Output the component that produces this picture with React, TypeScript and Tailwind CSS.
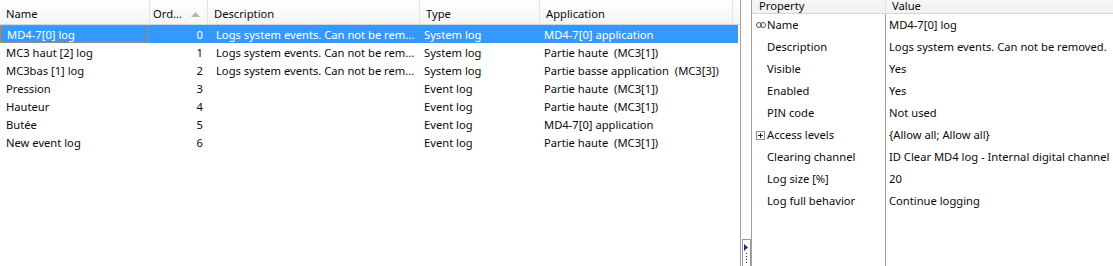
const rows = [
  { name: 'MD4-7[0] log', order: 0, desc: 'Logs system events. Can not be rem...', type: 'System log', app: 'MD4-7[0] application' },
  { name: 'MC3 haut [2] log', order: 1, desc: 'Logs system events. Can not be rem...', type: 'System log', app: 'Partie haute  (MC3[1])' },
  { name: 'MC3bas [1] log', order: 2, desc: 'Logs system events. Can not be rem...', type: 'System log', app: 'Partie basse application  (MC3[3])' },
  { name: 'Pression', order: 3, desc: '', type: 'Event log', app: 'Partie haute  (MC3[1])' },
  { name: 'Hauteur', order: 4, desc: '', type: 'Event log', app: 'Partie haute  (MC3[1])' },
  { name: 'Butée', order: 5, desc: '', type: 'Event log', app: 'MD4-7[0] application' },
  { name: 'New event log', order: 6, desc: '', type: 'Event log', app: 'Partie haute  (MC3[1])' },
];

const props = [
  { label: 'Name', value: 'MD4-7[0] log', icon: 'link' },
  { label: 'Description', value: 'Logs system events. Can not be removed.' },
  { label: 'Visible', value: 'Yes' },
  { label: 'Enabled', value: 'Yes' },
  { label: 'PIN code', value: 'Not used' },
  { label: 'Access levels', value: '{Allow all; Allow all}', icon: 'plus' },
  { label: 'Clearing channel', value: 'ID Clear MD4 log - Internal digital channel' },
  { label: 'Log size [%]', value: '20' },
  { label: 'Log full behavior', value: 'Continue logging' },
];

function LinkIcon() {
  return (
    <svg width="10" height="6" viewBox="0 0 10 6" className="shrink-0">
      <rect x="0.5" y="0.5" width="5" height="5" rx="2.5" fill="none" stroke="#555" />
      <rect x="4.5" y="0.5" width="5" height="5" rx="2.5" fill="none" stroke="#555" />
    </svg>
  );
}

function PlusBox() {
  return (
    <svg width="9" height="9" viewBox="0 0 9 9" className="shrink-0">
      <rect x="0.5" y="0.5" width="8" height="8" fill="#fff" stroke="#8c8c8c" />
      <path d="M2 4.5h5M4.5 2v5" stroke="#222" />
    </svg>
  );
}

function HeaderCell({ w, children, pl = 'pl-[6px]' }: { w: string; children?: React.ReactNode; pl?: string }) {
  return (
    <div className={`${w} h-full flex items-center pt-[5px] ${pl} border-r border-[#e3e3e3] shrink-0`}>
      {children}
    </div>
  );
}

export default function App() {
  return (
    <div
      className="w-[1113px] h-[266px] flex bg-white text-[#0a0a0a] text-[11.2px] overflow-hidden"
      style={{ fontFamily: '"Noto Sans", Lato, sans-serif' }}
    >
      {/* Log list */}
      <div className="w-[741px] h-full border-r border-[#a0a0a0] shrink-0">
        <div className="h-[25px] flex bg-gradient-to-b from-white to-[#f4f5f7] border-b border-[#d5d5d5]">
          <HeaderCell w="w-[150px]">Name</HeaderCell>
          <HeaderCell w="w-[58px]" pl="pl-[3px]">
            <span>Ord...</span>
            <svg width="9" height="5" viewBox="0 0 9 5" className="ml-[9px]">
              <path d="M0 5L4.5 0L9 5Z" fill="#b4b4b4" />
            </svg>
          </HeaderCell>
          <HeaderCell w="w-[212px]">Description</HeaderCell>
          <HeaderCell w="w-[120px]">Type</HeaderCell>
          <HeaderCell w="w-[193px]">Application</HeaderCell>
        </div>
        {rows.map((r, i) => {
          const sel = i === 0;
          return (
            <div key={r.name} className={`h-[18px] flex items-center w-[738px] ${sel ? 'bg-[#3399ff] text-white' : ''}`}>
              <div className={`w-[148px] h-full flex items-center pt-[2px] pl-[6px] shrink-0 ${sel ? 'border border-dotted border-[#e08a3c]' : ''}`}>
                {r.name}
              </div>
              <div className="w-[56px] h-full flex items-center justify-end pt-[2px] pr-[1px] shrink-0">{r.order}</div>
              <div className="w-[212px] h-full flex items-center pt-[2px] pl-[12px] shrink-0 whitespace-nowrap overflow-hidden">{r.desc}</div>
              <div className="w-[120px] h-full flex items-center pt-[2px] pl-[8px] shrink-0">{r.type}</div>
              <div className="h-full flex items-center pt-[2px] pl-[8px] whitespace-pre">{r.app}</div>
            </div>
          );
        })}
      </div>

      {/* Splitter */}
      <div className="w-[11px] h-full border-r border-[#a0a0a0] shrink-0 flex flex-col justify-end items-center">
        <div className="w-[9px] h-[27px] border border-[#9a9a9a] border-b-0 flex flex-col items-center pt-[4px] gap-[2px]">
          <svg width="4" height="7" viewBox="0 0 4 7">
            <path d="M0 0L4 3.5L0 7Z" fill="#1a2a8c" />
          </svg>
          <div className="w-[1px] h-[1px] bg-[#1a2a8c]" />
          <div className="w-[1px] h-[1px] bg-[#1a2a8c]" />
          <div className="w-[1px] h-[1px] bg-[#1a2a8c]" />
          <div className="w-[1px] h-[1px] bg-[#1a2a8c]" />
        </div>
      </div>

      {/* Property grid */}
      <div className="flex-1 h-full flex flex-col">
        <div className="h-[14px] flex bg-gradient-to-b from-[#f7f7f7] to-[#f0f1f3] border-b border-[#d5d5d5] overflow-hidden leading-[12px]">
          <div className="w-[134px] pl-[7px] border-r border-[#e3e3e3] shrink-0">Property</div>
          <div className="pl-[6px]">Value</div>
        </div>
        <div className="flex-1 flex">
          <div className="w-[134px] border-r border-[#a0a0a0] shrink-0">
            {props.map((p) => (
              <div key={p.label} className="h-[22px] flex items-center">
                <div className="w-[15px] flex justify-center shrink-0 pl-[2px]">
                  {p.icon === 'link' && <LinkIcon />}
                  {p.icon === 'plus' && <PlusBox />}
                </div>
                <span className="whitespace-nowrap">{p.label}</span>
              </div>
            ))}
          </div>
          <div className="flex-1 overflow-hidden">
            {props.map((p) => (
              <div key={p.label} className="h-[22px] flex items-center pl-[3px] whitespace-nowrap">
                {p.value}
              </div>
            ))}
          </div>
        </div>
      </div>
    </div>
  );
}
